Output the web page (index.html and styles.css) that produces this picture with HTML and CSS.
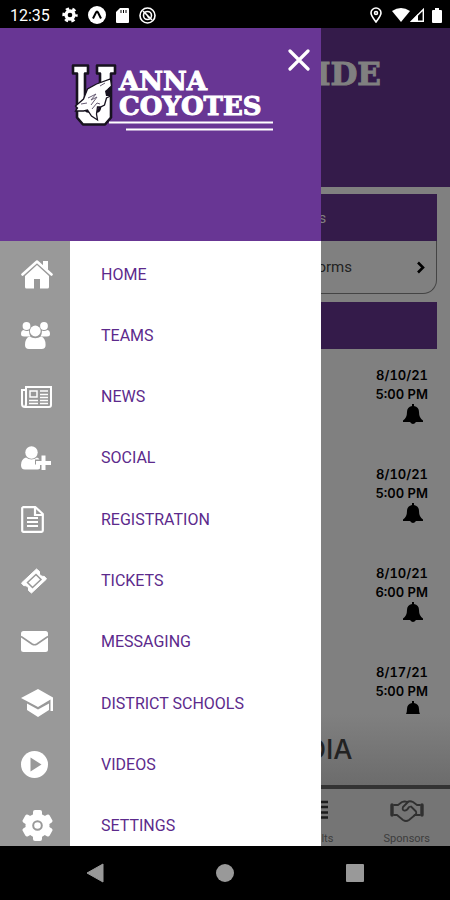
FILE: index.html
```html
<!DOCTYPE html>
<html lang="en">
<head>
<meta charset="utf-8">
<meta name="viewport" content="width=device-width, initial-scale=1">
<title>Anna Coyotes</title>
<link rel="stylesheet" href="styles.css">
</head>
<body>
<div class="status">
  <span class="clock">12:35</span>
  <svg width="16" height="16" viewBox="0 0 24 24" fill="none" stroke="#fff"><circle cx="12" cy="12" r="6" stroke-width="5"/><circle cx="12" cy="12" r="9.5" stroke-width="4" stroke-dasharray="5 4.95" stroke-dashoffset="2.5"/></svg>
  <svg width="18" height="18" viewBox="0 0 18 18"><circle cx="9" cy="9" r="9" fill="#fff"/><path d="M5 12.500 8 6.500q1-2 2 0L13 12.500" fill="none" stroke="#000" stroke-width="2"/></svg>
  <svg width="13" height="15" viewBox="0 0 13 15"><path d="M4 0h8q1 0 1 1v13q0 1-1 1H1q-1 0-1-1V4z" fill="#fff"/><path d="M5 2v3M7.500 2v3M10 2v3" stroke="#000"/></svg>
  <svg width="17" height="17" viewBox="0 0 17 17" fill="none" stroke="#fff" stroke-width="1.600"><circle cx="8.500" cy="8.500" r="7.500"/><circle cx="8.500" cy="8.500" r="4"/><path d="m4 4 9 9M8 8l2 3"/></svg>
  <span class="status-right">
    <svg width="12" height="16" viewBox="0 0 12 16" fill="none" stroke="#fff" stroke-width="1.600"><path d="M6 15C3 11 1 8.500 1 6a5 5 0 0 1 10 0c0 2.500-2 5-5 9z"/><circle cx="6" cy="6" r="1.500"/></svg>
    <svg class="wifi" width="18" height="14" viewBox="0 0 18 14"><path d="M0 3Q9-3 18 3L9 14z" fill="#fff"/></svg>
    <svg width="14" height="14" viewBox="0 0 14 14"><path d="M1.500 13.300 13.300 1.500v11.800z" fill="none" stroke="#fff" stroke-width="1.400"/><path d="M1 13.500 8 6v7.500z" fill="#fff"/></svg>
    <svg class="battery" width="10" height="15" viewBox="0 0 10 15"><path d="M3 0h4v2h2q1 0 1 1v11q0 1-1 1H1q-1 0-1-1V3q0-1 1-1h2z" fill="#fff"/></svg>
  </span>
</div>

<div class="app">
  <aside class="drawer">
    <header class="drawer-head">
      <svg class="logo" width="206" height="70" viewBox="70 62 206 70">
        <path d="M73 65.500h15v8h-3v33q0 5 4 5h7q4 0 4-5v-33h-3v-8h18v8h-4v44l-6 7H83l-6-7v-44h-4z" fill="#fff" stroke="#17121f" stroke-width="2.600" stroke-linejoin="round"/>
        <path d="M110.500 79l1 7-3 3 2 7-4 2-2 7-4 2-3 0-1 7 1 6-6-4-4-6-4 1-8 0 2-3-2-2 8-7 4-10 9-5z" fill="#fff" stroke="#17121f" stroke-width="1.300"/>
        <path d="M110 87l-5 4 1 5 4 0z" fill="#17121f"/>
        <path d="M105 83l-5 3M88 98l8-4-5 6 6-3-6 8M81 104l6-1M92 109l5-6 3 1" fill="none" stroke="#665b73"/>
        <path d="M109 122.500h164M126 129.500h147" stroke="#fff" stroke-width="2"/>
        <text x="119" y="90">ANNA</text>
        <text x="119" y="115">COYOTES</text>
      </svg>
      <button class="close" type="button" aria-label="Close menu"><svg width="22" height="22" viewBox="0 0 22 22"><path d="m2 2 18 18M20 2 2 20" stroke="#fff" stroke-width="3.200" stroke-linecap="round"/></svg></button>
    </header>
    <nav class="menu">
      <a href="#"><span class="ico"><svg width="32" height="30" viewBox="0 0 32 30" fill="#fff"><path d="M22 2h5v9l-5-4z"/><path d="M1.500 15.500 16 2.500l14.500 13" fill="none" stroke="#fff" stroke-width="2.600" stroke-linecap="round" stroke-linejoin="round"/><path d="M4 17 16 6l12 11v11q0 1.500-1.500 1.500H19V20h-6v9.500H5.500Q4 29.500 4 28z"/></svg></span>HOME</a>
      <a href="#"><span class="ico"><svg width="29" height="27" viewBox="0 0 29 27" fill="#fff"><circle cx="5.500" cy="4" r="3.900"/><circle cx="23" cy="4" r="3.900"/><path d="M2.500 8q3 1.800 5.500.5 0 3.500 1.500 6H3q-3 0-3-2.500Q0 8.500 2.500 8zM26.500 8q-3 1.800-5.500.5 0 3.500-1.500 6H26q3 0 3-2.500 0-3.500-2.500-4z"/><circle cx="14.300" cy="9" r="5.400"/><path d="M8.500 14.500q5.800 3.500 11.600 0 4.500 1.500 4.500 8.500 0 4-4 4H8q-4 0-4-4 0-7 4.500-8.500z"/></svg></span>TEAMS</a>
      <a href="#"><span class="ico"><svg width="31" height="22" viewBox="0 0 31 22" fill="none" stroke="#fff" stroke-width="2"><path d="M5 4H1v14q0 3 3 3h24q2 0 2-2V1H5v17q0 3-2 3"/><path d="M9 5h7v6H9zM8 14.500h9M8 17.500h9M19 5h8M19 8.500h8M19 11.500h8M19 14.500h8M19 17.500h8" stroke-width="1.500"/></svg></span>NEWS</a>
      <a href="#"><span class="ico"><svg width="31" height="24" viewBox="0 0 31 24" fill="#fff"><circle cx="10.500" cy="6.500" r="6.200"/><path d="M5 11.500q5.500 4 11 0 1.500.5 2.500 2H14v5h5v4q-1 1-2.500 1H4q-4 0-4-4.500Q0 13 5 11.500z"/><path d="M20.500 9.500h4v5.500H30v4h-5.500v5h-4v-5H15v-4h5.500z"/></svg></span>SOCIAL</a>
      <a href="#"><span class="ico"><svg width="23" height="27" viewBox="0 0 23 27" fill="none" stroke="#fff" stroke-width="2.200"><path d="M2 1.200h12.500L21.800 8v16.500q0 1.300-1.300 1.300H2.500q-1.300 0-1.300-1.300V2z" stroke-linejoin="round"/><path d="M14 1v8h8" /><path d="M6 12h11M6 16h11M6 20h11" stroke-width="2"/></svg></span>REGISTRATION</a>
      <a href="#"><span class="ico"><svg width="26" height="26" viewBox="0 0 26 26"><path d="m15.500 1 3 2.500q-.5 3 1 4t4 1L25.500 11 10.500 25l-3-2.500q.5-3-1-4t-4-1L.5 15z" fill="#fff" stroke="#fff" stroke-linejoin="round"/><path d="m6.500 14.500 8.500-8 5 5-8.500 8z" fill="none" stroke="#999" stroke-width="1.500"/></svg></span>TICKETS</a>
      <a href="#"><span class="ico"><svg width="27" height="21" viewBox="0 0 27 21"><rect width="27" height="21" rx="2.500" fill="#fff"/><path d="M0 5.500 11 13q2.500 1.500 5 0l11-7.500" fill="none" stroke="#999" stroke-width="1.700"/></svg></span>MESSAGING</a>
      <a href="#"><span class="ico"><svg width="33" height="28" viewBox="0 0 33 28" fill="#fff"><path d="M17 0 32 8.500V22h-2.500V10.500L17 18 0 9z"/><path d="m6 14.500 11 6 11-6V21l-11 7-11-7z"/></svg></span>DISTRICT SCHOOLS</a>
      <a href="#"><span class="ico"><svg width="27" height="27" viewBox="0 0 27 27"><circle cx="13.500" cy="13.500" r="13.500" fill="#fff"/><path d="m9.500 6.500 11 7-11 7z" fill="#999"/></svg></span>VIDEOS</a>
      <a href="#"><span class="ico gear"><svg width="31" height="31" viewBox="0 0 31 31"><g fill="#fff"><circle cx="15.500" cy="15.500" r="12"/><rect x="11" y="0" width="9" height="31" rx="2"/><rect x="11" y="0" width="9" height="31" rx="2" transform="rotate(60 15.500 15.500)"/><rect x="11" y="0" width="9" height="31" rx="2" transform="rotate(120 15.500 15.500)"/></g><circle cx="15.500" cy="15.500" r="4.300" fill="#fff" stroke="#999" stroke-width="2"/></svg></span>SETTINGS</a>
    </nav>
  </aside>

  <main class="page">
    <header class="page-head"><span>IDE</span></header>
    <div class="cards">
      <h2 class="bar">s</h2>
      <a class="card-link" href="#"><span>orms</span><svg width="9" height="13" viewBox="0 0 9 13"><path d="m2 1.500 5 5-5 5" fill="none" stroke="#000" stroke-width="2.600"/></svg></a>
      <div class="bar second"></div>
    </div>
    <div class="events">
      <div class="event"><span>8/10/21</span><span>5:00 PM</span><svg width="20" height="20" viewBox="0 0 20 20"><path d="M9 0h2v2q5 1 5 6 0 6 4 8.500V18h-7q-3 4-6 0H0v-1.500Q4 14 4 8q0-5 5-6z"/></svg></div>
      <div class="event"><span>8/10/21</span><span>5:00 PM</span><svg width="20" height="20" viewBox="0 0 20 20"><path d="M9 0h2v2q5 1 5 6 0 6 4 8.500V18h-7q-3 4-6 0H0v-1.500Q4 14 4 8q0-5 5-6z"/></svg></div>
      <div class="event"><span>8/10/21</span><span>6:00 PM</span><svg width="20" height="20" viewBox="0 0 20 20"><path d="M9 0h2v2q5 1 5 6 0 6 4 8.500V18h-7q-3 4-6 0H0v-1.500Q4 14 4 8q0-5 5-6z"/></svg></div>
      <div class="event"><span>8/17/21</span><span>5:00 PM</span><svg width="20" height="20" viewBox="0 0 20 20"><path d="M9 0h2v2q5 1 5 6 0 6 4 8.500V18h-7q-3 4-6 0H0v-1.500Q4 14 4 8q0-5 5-6z"/></svg></div>
    </div>
    <h2 class="media"><span>DIA</span></h2>
    <nav class="tabs">
      <a class="results" href="#"><svg width="8" height="20" viewBox="0 0 8 20"><path d="M0 2h7M0 7h7M0 12.500h7M0 17.500h7" stroke="#1c1c1c" stroke-width="2.400"/></svg><span>lts</span></a>
      <a class="sponsors" href="#"><svg width="34" height="22" viewBox="0 0 34 22" fill="none" stroke="#303030" stroke-width="1.800" stroke-linejoin="round" stroke-linecap="round"><path d="M2 5v10M32 5v10" stroke-width="3.400"/><path d="M4 5l4 0 4-3q3-1 5 0 3-1.500 6 0l4 3h3M4 15h3l6 5q3 2 6 0l6-5h5"/><path d="M18 2l-5 5q-1 3 1 3.500 3 .5 5-3.500l2-.500 5 5q1 3-2 4"/></svg><span>Sponsors</span></a>
    </nav>
  </main>
</div>

<div class="sysnav">
  <button type="button" aria-label="Back"><svg width="18" height="20" viewBox="0 0 18 20"><path d="M17 1v18L1 10z" fill="#999" stroke="#999" stroke-linejoin="round"/></svg></button>
  <button type="button" aria-label="Home"><svg width="18" height="18" viewBox="0 0 18 18"><circle cx="9" cy="9" r="9" fill="#999"/></svg></button>
  <button type="button" aria-label="Recent apps"><svg width="18" height="18" viewBox="0 0 18 18"><rect width="18" height="18" rx="1" fill="#999"/></svg></button>
</div>
</body>
</html>
```
FILE: styles.css
```css
* { box-sizing: border-box; }
body {
  margin: 0;
  height: 100vh;
  display: flex;
  flex-direction: column;
  background: #000;
  font-family: Roboto, sans-serif;
  overflow: hidden;
}
svg { display: block; flex: none; }
a { color: inherit; text-decoration: none; }
h2 { margin: 0; font-weight: 400; }
button { padding: 0; border: 0; background: none; }

.status {
  flex: none;
  height: 28px;
  padding: 2px 8px 0 10px;
  display: flex;
  align-items: center;
  gap: 10px;
  color: #fff;
}
.clock { font-size: 16px; margin-right: 2px; }
.status-right { margin-left: auto; display: flex; align-items: center; }
.wifi { margin-left: 10px; }
.battery { margin-left: 8px; }

.app { flex: 1; min-height: 0; display: flex; }
.drawer {
  flex: 5 1 0;
  min-width: 0;
  display: flex;
  flex-direction: column;
  background: #fff;
}
.drawer-head {
  flex: none;
  height: 213px;
  padding: 34px 10px 0 70px;
  display: flex;
  align-items: flex-start;
  background: #683694;
}
.logo text {
  font: bold 26px "DejaVu Serif", serif;
  fill: #fff;
  stroke: #fff;
  stroke-width: 1px;
}
.close { margin: -13px 0 0 12px; }

.menu {
  flex: 1;
  min-height: 0;
  padding-top: 13px;
  display: flex;
  flex-direction: column;
  justify-content: space-between;
  background: linear-gradient(90deg, #999 70px, #fff 70px);
}
.menu a {
  height: 40px;
  display: flex;
  align-items: center;
  font-size: 16px;
  color: #5c2a8c;
}
.ico { width: 101px; padding-left: 21px; flex: none; }
.gear { padding-left: 22px; }

.page {
  flex: 2 1 0;
  min-width: 0;
  overflow: hidden;
  display: flex;
  flex-direction: column;
  background: #808080;
  color: #000;
}
.page-head {
  flex: none;
  height: 159px;
  padding: 28px 69px 0 0;
  display: flex;
  justify-content: flex-end;
  overflow: hidden;
  background: #341b4a;
  color: #808080;
  font: bold 31px/36px "DejaVu Serif", serif;
  -webkit-text-stroke: 1px #808080;
}
.cards { flex: none; padding: 7px 13px 0 0; }
.bar {
  height: 47px;
  background: #341b4a;
  color: #808080;
  font-size: 15px;
  line-height: 48px;
  text-indent: -3px;
}
.second { margin-top: 8px; }
.card-link {
  height: 53px;
  padding: 0 11px 0 0;
  display: flex;
  align-items: center;
  justify-content: space-between;
  border: solid #444;
  border-width: 0 1px 1px 0;
  border-radius: 0 0 14px 0;
  color: #222;
  font-size: 15px;
}
.card-link span { margin-left: -4px; }

.events { flex: 1; min-height: 0; padding-top: 17px; overflow: hidden; }
.event {
  height: 99px;
  padding-right: 22px;
  display: flex;
  flex-direction: column;
  align-items: flex-end;
  font: 600 13px/19px Inter, sans-serif;
  font-variant-numeric: tabular-nums;
}
.event svg { margin-right: 5px; }
.media {
  flex: none;
  height: 71px;
  padding-top: 20px;
  background: linear-gradient(#808080, #6c6c6c);
  color: #222;
  font: 500 27px/32px Inter, sans-serif;
  display: flex;
}
.media span { margin-left: -15px; }
.tabs {
  flex: none;
  height: 61px;
  border-top: 4px solid #333;
  background: #757575;
  display: flex;
  justify-content: space-between;
  padding: 11px 20px 0 0;
  font-size: 11px;
  line-height: 14px;
  color: #3c3c3c;
}
.tabs a { display: flex; flex-direction: column; justify-content: space-between; height: 46px; }
.sponsors { align-items: center; }

.sysnav {
  flex: none;
  height: 54px;
  padding: 0 30px;
  display: flex;
}
.sysnav button { flex: 1; display: flex; align-items: center; justify-content: center; }
```
